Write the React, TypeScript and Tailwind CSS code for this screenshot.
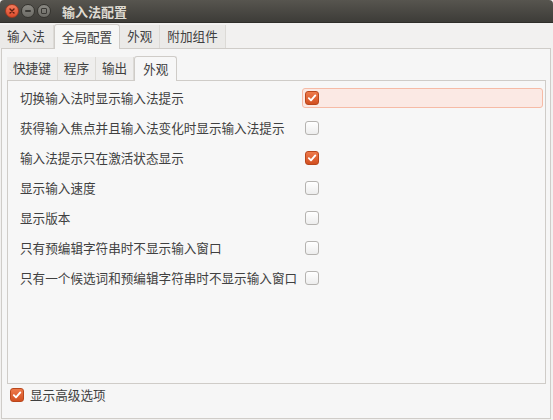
import React from "react";

const font = { fontFamily: '"Noto Sans CJK SC", "Noto Sans", sans-serif' };

function Check({ checked }: { checked: boolean }) {
  if (checked) {
    return (
      <div className="w-[14px] h-[14px] rounded-[3px] border border-[#b9471c] bg-gradient-to-b from-[#ee7a4b] to-[#d24f1f] flex items-center justify-center shrink-0">
        <svg width="10" height="10" viewBox="0 0 10 10">
          <path d="M1.8 5.2 L4 7.4 L8.3 2.4" fill="none" stroke="white" strokeWidth="1.9" strokeLinecap="round" strokeLinejoin="round" />
        </svg>
      </div>
    );
  }
  return <div className="w-[14px] h-[14px] rounded-[3px] border border-[#b5b3b0] bg-gradient-to-b from-[#ffffff] to-[#ededed] shrink-0" />;
}

const rows: [string, boolean][] = [
  ["切换输入法时显示输入法提示", true],
  ["获得输入焦点并且输入法变化时显示输入法提示", false],
  ["输入法提示只在激活状态显示", true],
  ["显示输入速度", false],
  ["显示版本", false],
  ["只有预编辑字符串时不显示输入窗口", false],
  ["只有一个候选词和预编辑字符串时不显示输入窗口", false],
];

export default function App() {
  return (
    <div className="w-[553px] h-[420px] bg-[#f2f1f0] flex flex-col overflow-hidden text-[#404040]" style={font}>
      {/* title bar */}
      <div className="h-[22px] bg-gradient-to-b from-[#57554f] to-[#3d3c38] flex items-center pl-[5px] shrink-0 rounded-t-[4px]">
        <div className="w-[14px] h-[14px] rounded-full bg-gradient-to-b from-[#f47b5c] to-[#dc4a2a] border border-[#9d3a22] flex items-center justify-center">
          <svg width="8" height="8" viewBox="0 0 8 8"><path d="M2 2 L6 6 M6 2 L2 6" stroke="#5a1d10" strokeWidth="1.4" strokeLinecap="round" /></svg>
        </div>
        <div className="w-[14px] h-[14px] rounded-full bg-gradient-to-b from-[#8a8983] to-[#6c6b66] border border-[#35342f] flex items-center justify-center ml-[2px]">
          <div className="w-[6px] h-[2px] bg-[#3a3935] rounded-sm" />
        </div>
        <div className="w-[14px] h-[14px] rounded-full bg-gradient-to-b from-[#8a8983] to-[#6c6b66] border border-[#35342f] flex items-center justify-center ml-[2px]">
          <div className="w-[6px] h-[6px] border-[1.5px] border-[#3a3935] rounded-[1px]" />
        </div>
        <div className="ml-[11px] text-[13px] font-bold text-[#dfdbd2] leading-none">输入法配置</div>
      </div>

      {/* top tabs */}
      <div className="h-[26px] flex items-end shrink-0 border-t border-[#2f2e2a]">
        <div className="h-[23px] pl-[7px] pr-[8px] flex items-center text-[12.6px] bg-[#ebeae8] border-r border-[#dcdad6]">输入法</div>
        <div className="h-[25px] px-[7px] flex items-center text-[12.6px] bg-[#f6f6f5] border border-b-0 border-[#cfccc8] rounded-t-[3px] -mb-px relative z-10">全局配置</div>
        <div className="h-[23px] px-[7px] flex items-center text-[12.6px] bg-[#ebeae8] border-r border-[#dcdad6]">外观</div>
        <div className="h-[23px] px-[7px] flex items-center text-[12.6px] bg-[#ebeae8] border-r border-[#dcdad6]">附加组件</div>
      </div>

      {/* outer notebook */}
      <div className="ml-[1px] mr-[2px] h-[371px] border border-[#cfccc8] bg-[#f6f6f6] flex flex-col pl-[5px] pr-[4px]">
        <div className="h-[31px] flex items-end shrink-0">
          <div className="h-[23px] px-[6px] flex items-center text-[12.6px] bg-[#efeeed] border-r border-[#dcdad6]">快捷键</div>
          <div className="h-[23px] px-[6px] flex items-center text-[12.6px] bg-[#efeeed] border-r border-[#dcdad6]">程序</div>
          <div className="h-[23px] px-[6px] flex items-center text-[12.6px] bg-[#efeeed] border-r border-[#dcdad6]">输出</div>
          <div className="h-[25px] px-[8px] flex items-center text-[12.6px] bg-[#f7f7f7] border border-b-0 border-[#cfccc8] rounded-t-[3px] -mb-px relative z-10">外观</div>
        </div>
        <div className="h-[304px] border border-[#cfccc8] bg-[#f7f7f7] pt-[7px] pr-[2px]">
          <div className="grid grid-cols-[auto_1fr] gap-x-[5px] gap-y-[10px] pl-[12px]">
            {rows.map(([label, checked], i) => (
              <React.Fragment key={i}>
                <div className="h-[20px] flex items-center text-[12.6px] whitespace-nowrap">{label}</div>
                <div
                  className={
                    "h-[20px] flex items-center pl-[2px] rounded-[3px] border " +
                    (i === 0 ? "border-[#f6bba6] bg-[#fbe9e4]" : "border-transparent")
                  }
                >
                  <Check checked={checked} />
                </div>
              </React.Fragment>
            ))}
          </div>
        </div>
        <div className="flex items-center gap-[6px] mt-[3px] ml-[3px] h-[16px]">
          <Check checked={true} />
          <span className="text-[12.6px]">显示高级选项</span>
        </div>
      </div>
    </div>
  );
}
